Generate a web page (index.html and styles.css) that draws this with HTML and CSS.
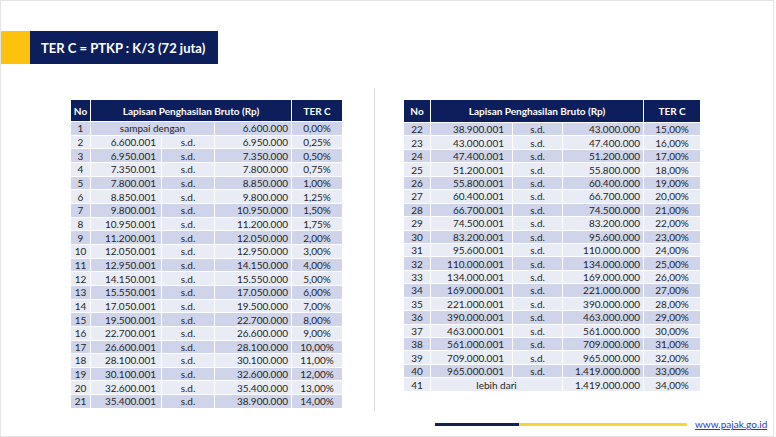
FILE: index.html
```html
<!DOCTYPE html>
<html lang="id">
<head>
<meta charset="utf-8">
<title>TER C</title>
<link rel="stylesheet" href="styles.css">
</head>
<body>
<div class="slide">
  <div class="title-bar">
    <div class="accent"></div>
    <div class="title">TER C = PTKP : K/3 (72 juta)</div>
  </div>
  <div class="content">
    <table class="ter ter-left">
      <colgroup><col class="c-no"><col class="c-from"><col class="c-sd"><col class="c-to"><col class="c-rate"></colgroup>
      <thead><tr><th>No</th><th colspan="3">Lapisan Penghasilan Bruto (Rp)</th><th>TER C</th></tr></thead>
      <tbody>
        <tr><td>1</td><td colspan="2" class="span">sampai dengan</td><td class="to">6.600.000</td><td>0,00%</td></tr>
        <tr><td>2</td><td class="from">6.600.001</td><td>s.d.</td><td class="to">6.950.000</td><td>0,25%</td></tr>
        <tr><td>3</td><td class="from">6.950.001</td><td>s.d.</td><td class="to">7.350.000</td><td>0,50%</td></tr>
        <tr><td>4</td><td class="from">7.350.001</td><td>s.d.</td><td class="to">7.800.000</td><td>0,75%</td></tr>
        <tr><td>5</td><td class="from">7.800.001</td><td>s.d.</td><td class="to">8.850.000</td><td>1,00%</td></tr>
        <tr><td>6</td><td class="from">8.850.001</td><td>s.d.</td><td class="to">9.800.000</td><td>1,25%</td></tr>
        <tr><td>7</td><td class="from">9.800.001</td><td>s.d.</td><td class="to">10.950.000</td><td>1,50%</td></tr>
        <tr><td>8</td><td class="from">10.950.001</td><td>s.d.</td><td class="to">11.200.000</td><td>1,75%</td></tr>
        <tr><td>9</td><td class="from">11.200.001</td><td>s.d.</td><td class="to">12.050.000</td><td>2,00%</td></tr>
        <tr><td>10</td><td class="from">12.050.001</td><td>s.d.</td><td class="to">12.950.000</td><td>3,00%</td></tr>
        <tr><td>11</td><td class="from">12.950.001</td><td>s.d.</td><td class="to">14.150.000</td><td>4,00%</td></tr>
        <tr><td>12</td><td class="from">14.150.001</td><td>s.d.</td><td class="to">15.550.000</td><td>5,00%</td></tr>
        <tr><td>13</td><td class="from">15.550.001</td><td>s.d.</td><td class="to">17.050.000</td><td>6,00%</td></tr>
        <tr><td>14</td><td class="from">17.050.001</td><td>s.d.</td><td class="to">19.500.000</td><td>7,00%</td></tr>
        <tr><td>15</td><td class="from">19.500.001</td><td>s.d.</td><td class="to">22.700.000</td><td>8,00%</td></tr>
        <tr><td>16</td><td class="from">22.700.001</td><td>s.d.</td><td class="to">26.600.000</td><td>9,00%</td></tr>
        <tr><td>17</td><td class="from">26.600.001</td><td>s.d.</td><td class="to">28.100.000</td><td>10,00%</td></tr>
        <tr><td>18</td><td class="from">28.100.001</td><td>s.d.</td><td class="to">30.100.000</td><td>11,00%</td></tr>
        <tr><td>19</td><td class="from">30.100.001</td><td>s.d.</td><td class="to">32.600.000</td><td>12,00%</td></tr>
        <tr><td>20</td><td class="from">32.600.001</td><td>s.d.</td><td class="to">35.400.000</td><td>13,00%</td></tr>
        <tr><td>21</td><td class="from">35.400.001</td><td>s.d.</td><td class="to">38.900.000</td><td>14,00%</td></tr>
      </tbody>
    </table>
    <div class="divider"></div>
    <table class="ter ter-right">
      <colgroup><col class="c-no"><col class="c-from"><col class="c-sd"><col class="c-to"><col class="c-rate"></colgroup>
      <thead><tr><th>No</th><th colspan="3">Lapisan Penghasilan Bruto (Rp)</th><th>TER C</th></tr></thead>
      <tbody>
        <tr><td>22</td><td class="from">38.900.001</td><td>s.d.</td><td class="to">43.000.000</td><td>15,00%</td></tr>
        <tr><td>23</td><td class="from">43.000.001</td><td>s.d.</td><td class="to">47.400.000</td><td>16,00%</td></tr>
        <tr><td>24</td><td class="from">47.400.001</td><td>s.d.</td><td class="to">51.200.000</td><td>17,00%</td></tr>
        <tr><td>25</td><td class="from">51.200.001</td><td>s.d.</td><td class="to">55.800.000</td><td>18,00%</td></tr>
        <tr><td>26</td><td class="from">55.800.001</td><td>s.d.</td><td class="to">60.400.000</td><td>19,00%</td></tr>
        <tr><td>27</td><td class="from">60.400.001</td><td>s.d.</td><td class="to">66.700.000</td><td>20,00%</td></tr>
        <tr><td>28</td><td class="from">66.700.001</td><td>s.d.</td><td class="to">74.500.000</td><td>21,00%</td></tr>
        <tr><td>29</td><td class="from">74.500.001</td><td>s.d.</td><td class="to">83.200.000</td><td>22,00%</td></tr>
        <tr><td>30</td><td class="from">83.200.001</td><td>s.d.</td><td class="to">95.600.000</td><td>23,00%</td></tr>
        <tr><td>31</td><td class="from">95.600.001</td><td>s.d.</td><td class="to">110.000.000</td><td>24,00%</td></tr>
        <tr><td>32</td><td class="from">110.000.001</td><td>s.d.</td><td class="to">134.000.000</td><td>25,00%</td></tr>
        <tr><td>33</td><td class="from">134.000.001</td><td>s.d.</td><td class="to">169.000.000</td><td>26,00%</td></tr>
        <tr><td>34</td><td class="from">169.000.001</td><td>s.d.</td><td class="to">221.000.000</td><td>27,00%</td></tr>
        <tr><td>35</td><td class="from">221.000.001</td><td>s.d.</td><td class="to">390.000.000</td><td>28,00%</td></tr>
        <tr><td>36</td><td class="from">390.000.001</td><td>s.d.</td><td class="to">463.000.000</td><td>29,00%</td></tr>
        <tr><td>37</td><td class="from">463.000.001</td><td>s.d.</td><td class="to">561.000.000</td><td>30,00%</td></tr>
        <tr><td>38</td><td class="from">561.000.001</td><td>s.d.</td><td class="to">709.000.000</td><td>31,00%</td></tr>
        <tr><td>39</td><td class="from">709.000.001</td><td>s.d.</td><td class="to">965.000.000</td><td>32,00%</td></tr>
        <tr><td>40</td><td class="from">965.000.001</td><td>s.d.</td><td class="to">1.419.000.000</td><td>33,00%</td></tr>
        <tr><td>41</td><td colspan="2">lebih dari</td><td class="to">1.419.000.000</td><td>34,00%</td></tr>
      </tbody>
    </table>
  </div>
  <div class="footer">
    <div class="rule"><span class="rule-navy"></span><span class="rule-yellow"></span></div>
    <a class="site" href="#">www.pajak.go.id</a>
  </div>
</div>
</body>
</html>
```
FILE: styles.css
```css
* { box-sizing: border-box; }
html, body { margin: 0; padding: 0; background: #ffffff; }
body { font-family: Lato, "Open Sans", sans-serif; color: #262626; }

.slide {
  width: 774px;
  height: 437px;
  border: 1px solid #e4e4e4;
  display: flex;
  flex-direction: column;
  overflow: hidden;
}

.title-bar {
  margin-top: 30px;
  height: 33px;
  display: flex;
}
.accent { width: 29px; background: #fdc20e; }
.title {
  width: 188px;
  background: #0c1f5c;
  color: #ffffff;
  font-weight: 700;
  font-size: 13px;
  display: flex;
  align-items: center;
  padding-left: 11px;
  white-space: nowrap;
}

.content {
  margin-top: 24px;
  display: flex;
  align-items: flex-start;
  padding-left: 69px;
}

.ter {
  border-collapse: collapse;
  table-layout: fixed;
  font-size: 10px;
  line-height: 1;
}
.ter th, .ter td {
  border: 1px solid #ffffff;
  padding: 0;
  text-align: center;
  white-space: nowrap;
  overflow: hidden;
}
.ter th {
  background: #0c1f5c;
  color: #ffffff;
  font-weight: 700;
}
.ter tbody tr:nth-child(odd) td { background: #cfd4ea; }
.ter tbody tr:nth-child(even) td { background: #e9ebf5; }
.ter td.to { text-align: right; padding-right: 3px; }

.ter-left { margin-top: 11px; width: 272px; }
.ter-left thead tr { height: 22px; }
.ter-left tbody tr { height: 13.67px; }
.ter-left .c-no { width: 20px; }
.ter-left .c-from { width: 71px; }
.ter-left .c-sd { width: 53px; }
.ter-left .c-to { width: 77px; }
.ter-left .c-rate { width: 51px; }
.ter-left td.from { text-align: right; padding-right: 5px; }

.divider {
  width: 1px;
  height: 324px;
  background: #d9d9d9;
  margin-left: 31px;
}

.ter-right { margin-top: 11px; margin-left: 28px; width: 297px; }
.ter-right thead tr { height: 23px; }
.ter-right tbody tr { height: 13.45px; }
.ter-right .c-no { width: 27px; }
.ter-right .c-from { width: 82px; }
.ter-right .c-sd { width: 50px; }
.ter-right .c-to { width: 81px; }
.ter-right .c-rate { width: 57px; }
.ter-right td.from { text-align: right; padding-right: 8px; }

.footer {
  margin-top: 5px;
  display: flex;
  align-items: center;
  padding-left: 434px;
  height: 14px;
}
.rule { display: flex; height: 3px; width: 252px; }
.rule-navy { width: 84px; background: #13224f; }
.rule-yellow { flex: 1; background: #f7d53a; }
.site {
  margin-left: 8px;
  font-size: 10px;
  color: #2438c8;
  text-decoration: underline;
}
```
